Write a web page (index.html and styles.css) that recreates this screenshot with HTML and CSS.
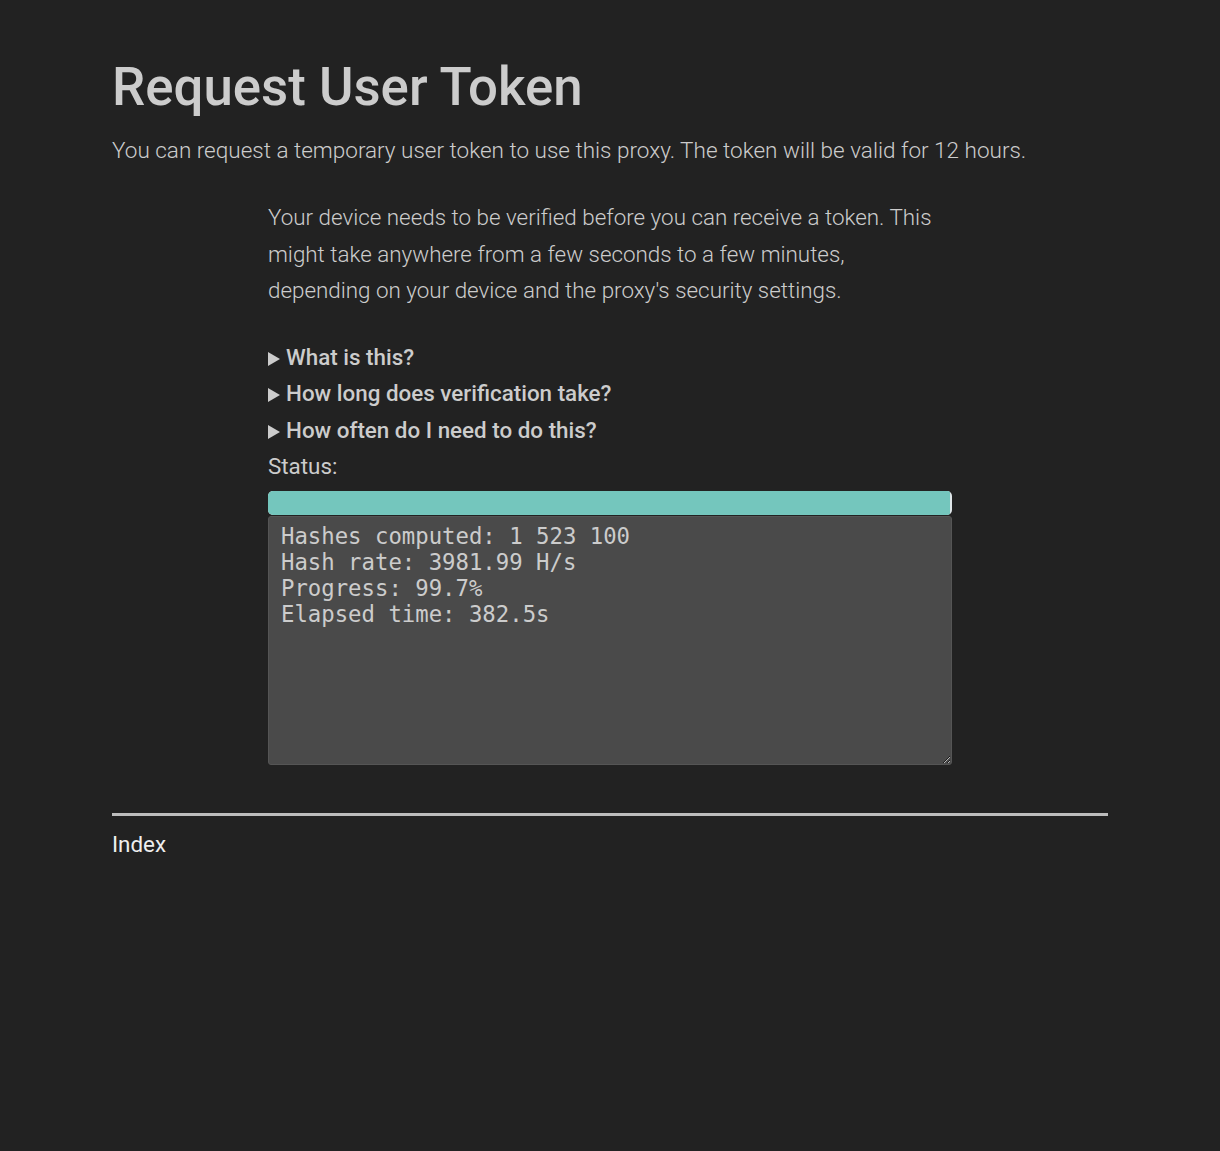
FILE: index.html
```html
<!DOCTYPE html>
<html lang="en">
<head>
<meta charset="utf-8">
<title>Request User Token</title>
<link rel="stylesheet" href="styles.css">
</head>
<body>
<main class="page">
  <h1 class="title">Request User Token</h1>
  <p class="lead">You can request a temporary user token to use this proxy. The token will be valid for 12 hours.</p>
  <section class="verify">
    <p class="intro">Your device needs to be verified before you can receive a token. This might take anywhere from a few seconds to a few minutes, depending on your device and the proxy's security settings.</p>
    <details class="faq"><summary>What is this?</summary></details>
    <details class="faq"><summary>How long does verification take?</summary></details>
    <details class="faq"><summary>How often do I need to do this?</summary></details>
    <div class="status-label">Status:</div>
    <div class="bar"><div class="bar-fill" style="width:99.7%"></div></div>
    <textarea class="log" readonly>Hashes computed: 1 523 100
Hash rate: 3981.99 H/s
Progress: 99.7%
Elapsed time: 382.5s</textarea>
  </section>
  <hr class="rule">
  <a class="index-link" href="#">Index</a>
</main>
</body>
</html>
```
FILE: styles.css
```css
html, body {
  margin: 0;
  padding: 0;
  background: #222222;
}
body {
  color: #cccccc;
  font-family: Roboto, "Noto Sans", sans-serif;
  font-size: 22.4px;
}
.page {
  width: 996px;
  margin: 0 auto;
  padding-top: 56px;
}
.title {
  margin: 0;
  font-size: 52.8px;
  font-weight: 500;
  line-height: 1.2;
}
.lead {
  margin: 13px 0 0;
  font-weight: 300;
  font-size: 22.5px;
  line-height: 1.6;
}
.verify {
  width: 684px;
  margin: 31px auto 0;
}
.intro {
  margin: 0 0 30px;
  font-weight: 300;
  line-height: 36.5px;
}
.faq summary {
  display: block;
  list-style: none;
  font-weight: 500;
  line-height: 36.5px;
  cursor: pointer;
}
.faq summary::-webkit-details-marker {
  display: none;
}
.faq summary::before {
  content: "";
  display: inline-block;
  width: 0;
  height: 0;
  border-left: 12px solid #cccccc;
  border-top: 7px solid transparent;
  border-bottom: 7px solid transparent;
  margin-right: 6px;
  vertical-align: -1px;
}
.status-label {
  line-height: 36.5px;
  margin-bottom: 6px;
}
.bar {
  height: 24px;
  border-radius: 5px;
  background: #dfe6e9;
  overflow: hidden;
}
.bar-fill {
  height: 100%;
  background: #74c6bd;
}
.log {
  display: block;
  box-sizing: border-box;
  width: 684px;
  height: 249px;
  margin: 1px 0 0;
  padding: 6px 12px;
  background: #4a4a4a;
  color: #cccccc;
  border: 1px solid #555555;
  border-radius: 3px;
  font-family: "DejaVu Sans Mono", monospace;
  font-size: 22.3px;
  line-height: 26px;
  resize: vertical;
}
.rule {
  margin: 48px 0 0;
  border: 0;
  border-top: 3px solid #bdbdbd;
}
.index-link {
  display: inline-block;
  margin-top: 14px;
  color: #eeeeee;
  text-decoration: none;
  line-height: 1.3;
}
```
